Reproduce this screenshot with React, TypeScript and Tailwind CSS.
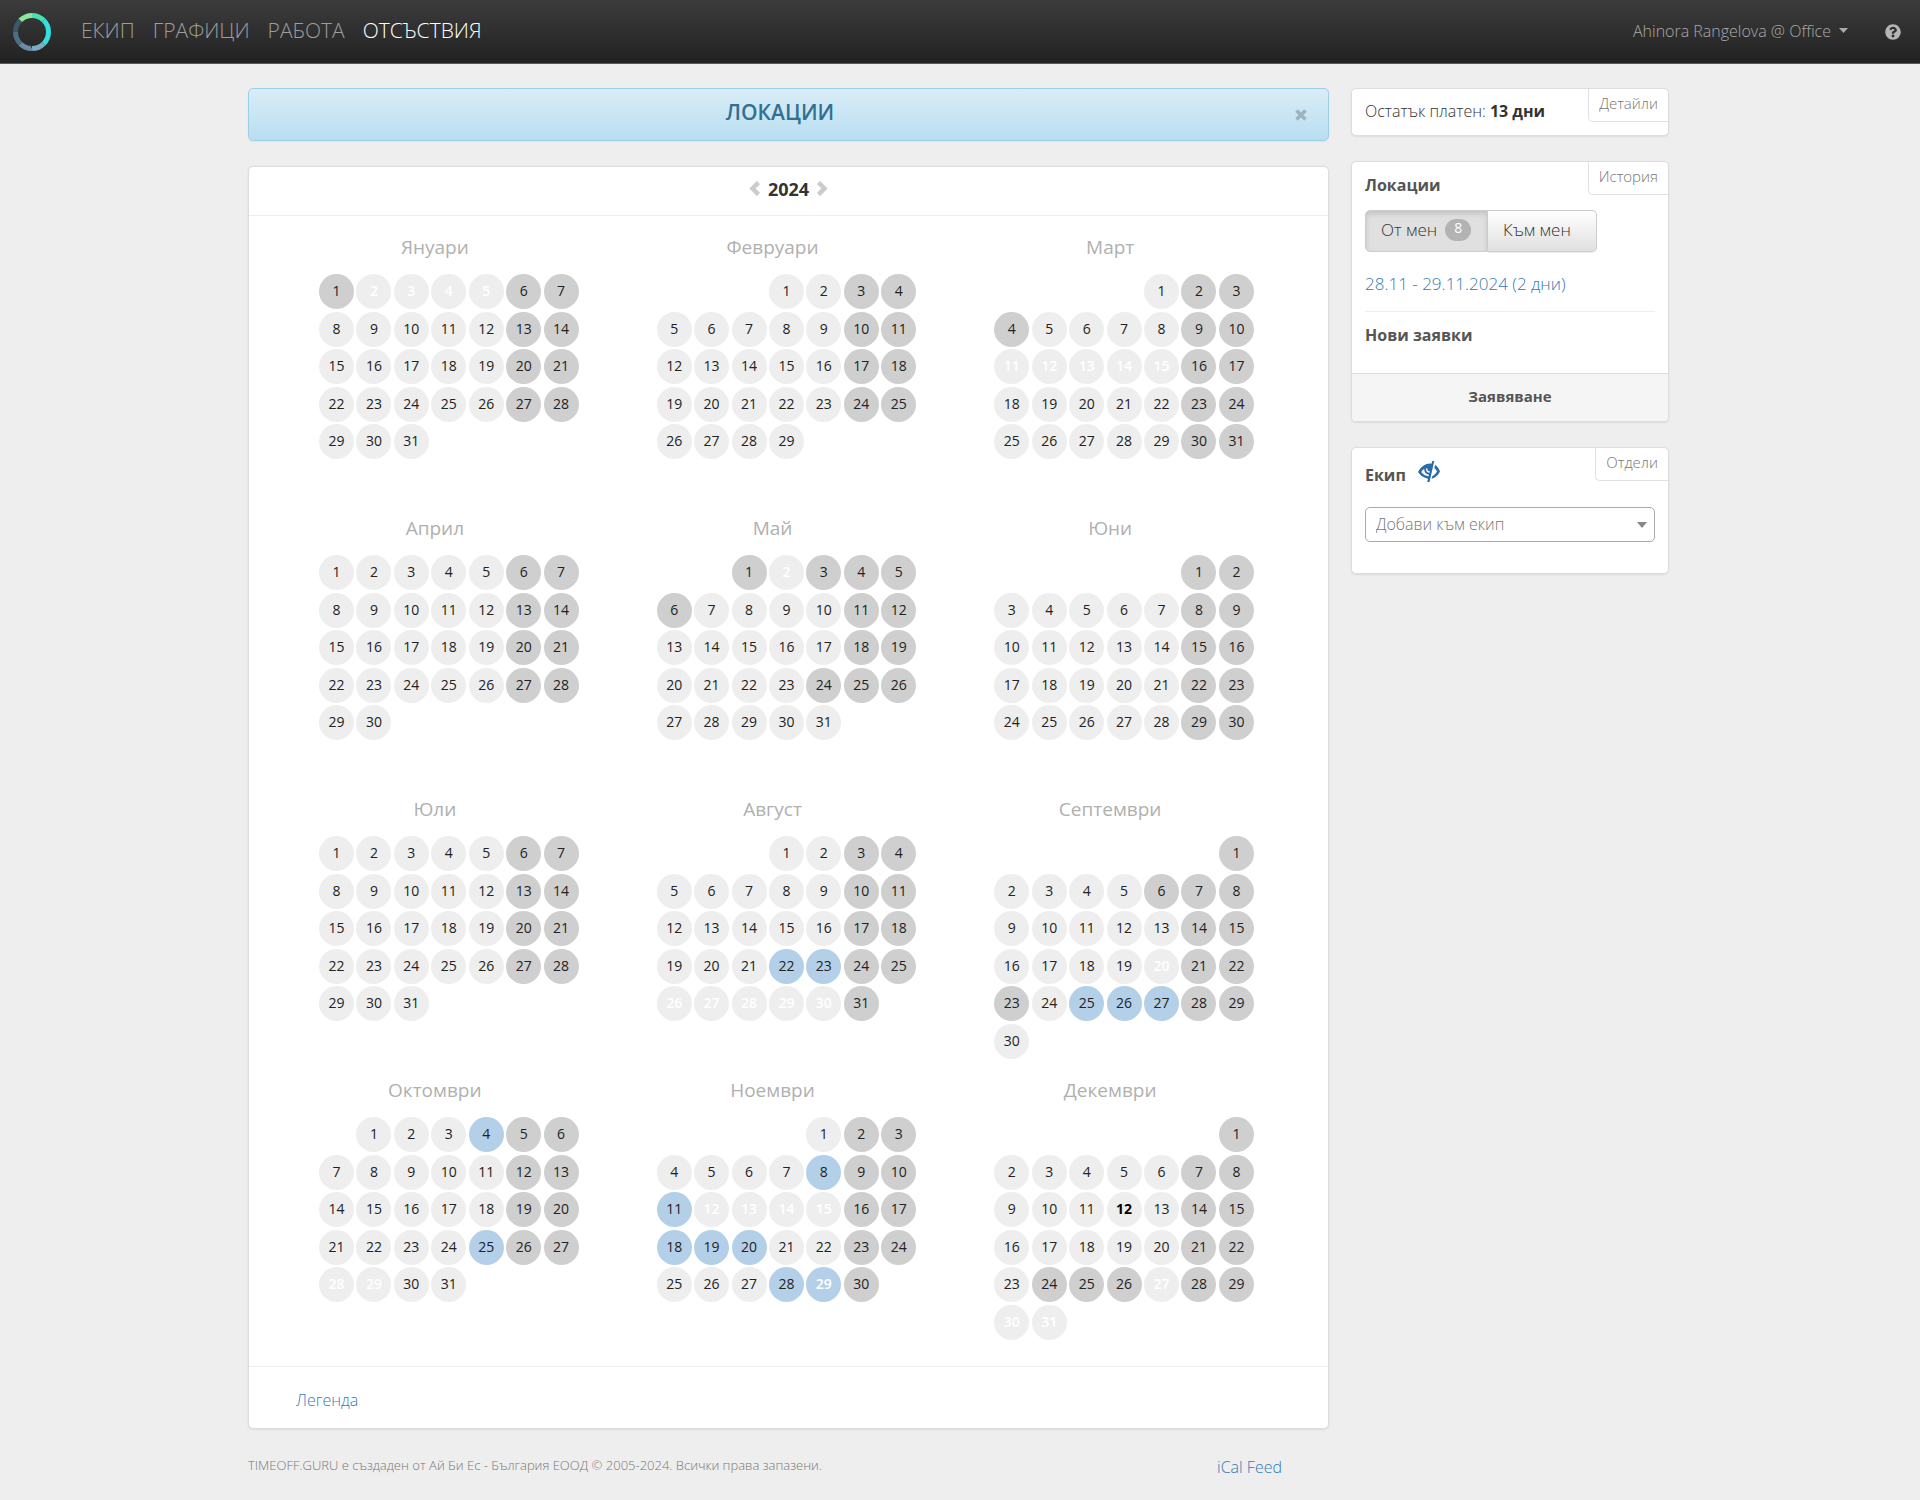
import type { ReactNode } from "react";
import { FaQuestionCircle } from "react-icons/fa";

const YEAR = 2024;

type Month = {
  name: string;
  holidays?: number[];
  taken?: number[];
  requested?: number[];
  today?: number;
};

const MONTHS: Month[] = [
  { name: "Януари", holidays: [1], taken: [2, 3, 4, 5] },
  { name: "Февруари" },
  { name: "Март", holidays: [4], taken: [11, 12, 13, 14, 15] },
  { name: "Април" },
  { name: "Май", holidays: [1, 3, 6, 24], taken: [2] },
  { name: "Юни" },
  { name: "Юли" },
  { name: "Август", taken: [26, 27, 28, 29, 30], requested: [22, 23] },
  { name: "Септември", holidays: [6, 23], taken: [20], requested: [25, 26, 27] },
  { name: "Октомври", taken: [28, 29], requested: [4, 25] },
  {
    name: "Ноември",
    taken: [12, 13, 14, 15, 29],
    requested: [8, 11, 18, 19, 20, 28, 29],
  },
  { name: "Декември", holidays: [24, 25, 26], taken: [27, 30, 31], today: 12 },
];

const NAV = ["ЕКИП", "ГРАФИЦИ", "РАБОТА", "ОТСЪСТВИЯ"];

// ring segments, clockwise from 12 o'clock
const RING = [
  "#4ae0b0",
  "#34e0dc",
  "#34e0dc",
  "#7aacc2",
  "#6f8aa3",
  "#4c7082",
  "#3d5969",
  "#8ae89c",
];

function Logo() {
  return (
    <svg className="size-10" viewBox="0 0 40 40" fill="none">
      {RING.map((color, i) => (
        <circle
          key={i}
          cx="20"
          cy="20"
          r="16.5"
          stroke={color}
          strokeWidth="5"
          pathLength="8"
          strokeDasharray="1 7"
          strokeDashoffset={-i}
          transform="rotate(-90 20 20)"
        />
      ))}
    </svg>
  );
}

function EyeClosed() {
  return (
    <svg className="h-[21px] w-[22px]" viewBox="0 0 22 21">
      <path
        fill="#2a6ca8"
        fillRule="evenodd"
        d="M0 11C3 5.5 7.500 2.800 12 2.600L13.500 2.800L14.200 0H16.300L11.500 21H9.200L10 17.700C6 17 2.500 14.500 0 11ZM3.200 11C5 13.300 7.500 15 10.600 15.300L11 13.600C8 13.400 6 11 6.300 7.800C5 8.700 4 9.800 3.200 11ZM8.300 7.300C7.600 9.500 8.600 11.700 11.400 11.900L11.800 10.200C10.200 10.300 9 9.300 9.500 7.600Z"
      />
      <path
        fill="#2a6ca8"
        d="M17.300 3.800C19 5 20.800 7.500 22 10.500C20.300 14 17.500 16.800 13.700 17.800L14.400 15C16.500 14 18 12.300 19 10.500C18.300 9 17.300 7.700 16.300 6.900Z"
      />
    </svg>
  );
}

function Chevron({ d }: { d: string }) {
  return (
    <svg className="h-[15px] w-[11px]" viewBox="0 0 11 15" fill="none">
      <path d={d} stroke="#cccccc" strokeWidth="4.5" />
    </svg>
  );
}

function dayClass(m: Month, day: number, col: number) {
  const off = col > 4 || m.holidays?.includes(day);
  const bg = m.requested?.includes(day)
    ? "bg-[#b4d0e9]"
    : off
      ? "bg-[#cfcfcf]"
      : "bg-[#eeeeee]";
  const text = m.taken?.includes(day)
    ? "text-white font-semibold"
    : m.today === day
      ? "text-black font-bold"
      : "text-[#222222]";
  return `${bg} ${text}`;
}

function MonthGrid({ month, index }: { month: Month; index: number }) {
  const offset = (new Date(YEAR, index, 1).getDay() + 6) % 7;
  const count = new Date(YEAR, index + 1, 0).getDate();

  return (
    <section>
      <h3 className="h-14 pt-4 text-center text-[19px] leading-[26px] text-[#b0b0b0]">
        {month.name}
      </h3>
      <div className="ml-[53px] grid h-[225px] w-[262px] grid-cols-7 grid-rows-6">
        {Array.from({ length: offset }, (_, i) => (
          <span key={`e${i}`} />
        ))}
        {Array.from({ length: count }, (_, i) => (
          <span
            key={i}
            className={`size-[35px] rounded-full text-center text-sm leading-[33px] ${dayClass(month, i + 1, (offset + i) % 7)}`}
          >
            {i + 1}
          </span>
        ))}
      </div>
    </section>
  );
}

function Card({ tab, children }: { tab: string; children: ReactNode }) {
  return (
    <section className="relative overflow-hidden rounded-[5px] border border-[#dddddd] bg-white shadow-[0_1px_2px_rgba(0,0,0,0.08)]">
      <a
        href="#"
        className="absolute top-0 right-0 h-[33px] rounded-bl-[5px] border-b border-l border-[#e0e0e6] px-[10px] text-[15px] leading-7 text-[#777777]"
      >
        {tab}
      </a>
      {children}
    </section>
  );
}

export default function App() {
  return (
    <div className="min-h-screen bg-[#eeeeee] font-['Open_Sans',sans-serif] text-base font-light text-[#333333]">
      <header className="flex h-16 items-center border-b border-[#5a5a5a] bg-linear-to-b from-[#3c3c3c] to-[#222222] pr-[19px] pl-3">
        <a href="#" aria-label="Начало">
          <Logo />
        </a>
        <nav className="ml-[29px] flex gap-[18px] pb-1 text-[21px] leading-[30px]">
          {NAV.map((item) => (
            <a
              key={item}
              href="#"
              className={item === "ОТСЪСТВИЯ" ? "text-white" : "text-[#9d9d9d]"}
            >
              {item}
            </a>
          ))}
        </nav>
        <button className="ml-auto flex items-center gap-2 pb-[2px] text-[#aaaaaa]">
          Ahinora Rangelova @ Office
          <svg className="h-[5px] w-[9px]" viewBox="0 0 9 5">
            <path d="M0 0h9L4.500 5z" fill="#aaaaaa" />
          </svg>
        </button>
        <a href="#" aria-label="Помощ" className="ml-[37px]">
          <FaQuestionCircle className="size-4 text-[#b4b4b4]" />
        </a>
      </header>

      <div className="mx-auto flex max-w-[1424px] gap-[22px] pt-6 pr-[3px]">
        <main className="min-w-0 flex-1">
          <div className="flex h-[53px] items-center rounded-[5px] border border-[#9acfea] bg-linear-to-b from-[#d9edf7] to-[#b9def0] pr-[21px] pl-4 shadow-[0_1px_2px_rgba(0,0,0,0.05)]">
            <h1 className="flex-1 pb-[6px] text-center text-[21px] leading-8 font-semibold text-[#31708f]">
              ЛОКАЦИИ
            </h1>
            <button aria-label="Затвори">
              <svg className="size-3" viewBox="0 0 12 12">
                <path
                  d="M1.500 1.500l9 9m0-9l-9 9"
                  stroke="#9db4be"
                  strokeWidth="3.500"
                />
              </svg>
            </button>
          </div>

          <div className="mt-[25px] rounded-[5px] border border-[#dddddd] bg-white shadow-[0_1px_2px_rgba(0,0,0,0.08)]">
            <div className="flex h-[49px] items-center justify-center gap-2 border-b border-[#eeeeee] pb-[5px]">
              <button aria-label="Предишна година">
                <Chevron d="M9.500 1.500l-6 6 6 6" />
              </button>
              <h2 className="text-lg leading-6 font-bold">{YEAR}</h2>
              <button aria-label="Следваща година">
                <Chevron d="M1.500 1.500l6 6-6 6" />
              </button>
            </div>
            <div className="grid grid-cols-3 pt-[2px] pr-[49px] pb-6 pl-[17px] font-normal">
              {MONTHS.map((m, i) => (
                <MonthGrid key={m.name} month={m} index={i} />
              ))}
            </div>
            <div className="h-[62px] border-t border-[#eeeeee] pl-[47px] leading-[66px]">
              <a href="#" className="text-[#337ab7]">
                Легенда
              </a>
            </div>
          </div>

          <footer className="flex items-center justify-between pt-[22px] pr-[47px]">
            <p className="text-[13px] leading-6 text-[#777777]">
              TIMEOFF.GURU е създаден от Ай Би Ес - България ЕООД © 2005-2024.
              Всички права запазени.
            </p>
            <a href="#" className="pt-1 text-[#337ab7]">
              iCal Feed
            </a>
          </footer>
        </main>

        <aside className="flex w-[318px] shrink-0 flex-col gap-[25px]">
          <Card tab="Детайли">
            <p className="h-[46px] pl-[13px] leading-[44px]">
              Остатък платен: <b className="font-bold">13 дни</b>
            </p>
          </Card>

          <Card tab="История">
            <div className="px-[13px] pt-[9px]">
              <h2 className="leading-7 font-bold text-[#555555]">Локации</h2>
              <div className="mt-[11px] flex h-[42px] text-[17px]">
                <button className="flex w-[123px] items-center gap-2 rounded-l-[5px] border border-[#cccccc] bg-[#e0e0e0] pb-[2px] pl-[15px] shadow-[inset_0_3px_5px_rgba(0,0,0,0.125)]">
                  От мен
                  <span className="h-[22px] w-[26px] rounded-full bg-[#b3b3b3] text-sm leading-[18px] font-normal text-white">
                    8
                  </span>
                </button>
                <button className="w-[109px] rounded-r-[5px] border border-l-0 border-[#cccccc] bg-linear-to-b from-white to-[#e0e0e0] pb-[2px] pl-[15px] text-left shadow-[0_1px_1px_rgba(0,0,0,0.075)]">
                  Към мен
                </button>
              </div>
              <a
                href="#"
                className="mt-5 block text-[17px] leading-6 text-[#337ab7]"
              >
                28.11 - 29.11.2024 (2 дни)
              </a>
              <hr className="mt-[15px] border-[#eeeeee]" />
              <h2 className="mt-[9px] leading-7 font-bold text-[#555555]">
                Нови заявки
              </h2>
            </div>
            <button className="mt-6 h-12 w-full border-t border-[#dddddd] bg-[#f5f5f5] pb-1 text-[15px] leading-6 font-bold text-[#555555]">
              Заявяване
            </button>
          </Card>

          <Card tab="Отдели">
            <div className="h-[125px] px-[13px] pt-[13px]">
              <h2 className="flex gap-3 leading-7 font-bold text-[#555555]">
                Екип
                <EyeClosed />
              </h2>
              <div className="relative mt-[18px]">
                <select
                  aria-label="Добави към екип"
                  className="h-[35px] w-full appearance-none rounded-[5px] border border-[#aaaaaa] bg-white pb-px pl-[10px] text-[#777777]"
                >
                  <option>Добави към екип</option>
                </select>
                <svg
                  className="pointer-events-none absolute top-[15px] right-2 h-[6px] w-[10px]"
                  viewBox="0 0 10 6"
                >
                  <path d="M0 0h10L5 6z" fill="#888888" />
                </svg>
              </div>
            </div>
          </Card>
        </aside>
      </div>
    </div>
  );
}
